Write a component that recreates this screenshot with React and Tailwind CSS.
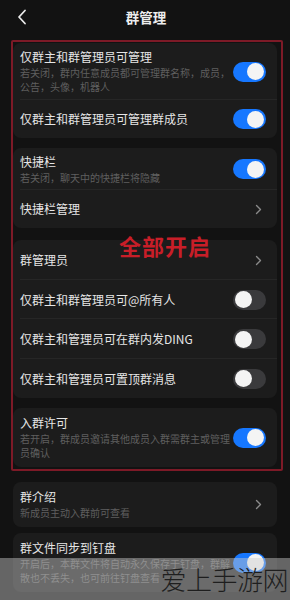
import React from "react";

const font = { fontFamily: '"Noto Sans CJK SC", "Noto Sans", sans-serif' };

function Toggle({ on }) {
  return on ? (
    <div className="relative z-10 w-[33px] h-[20px] rounded-full bg-[#1677ff] flex items-center justify-end pr-[2px] shrink-0">
      <div className="w-[17px] h-[17px] rounded-full bg-[#f4f4f4]" />
    </div>
  ) : (
    <div className="relative z-10 w-[33px] h-[20px] rounded-full bg-[#3a3a3c] flex items-center justify-start pl-[2px] shrink-0">
      <div className="w-[17px] h-[17px] rounded-full bg-[#f4f4f4]" />
    </div>
  );
}

function Chevron() {
  return (
    <svg width="7" height="11" viewBox="0 0 7 11" className="shrink-0 mr-[4px]">
      <path d="M1.5 1.5 L5.5 5.5 L1.5 9.5" stroke="#8a8a8a" strokeWidth="1.4" fill="none" strokeLinecap="round" strokeLinejoin="round" />
    </svg>
  );
}

function Row({ title, desc, right, h, divider, descCls = "" }) {
  return (
    <div className={`relative flex items-center pl-[7px] pr-[11px] ${h}`}>
      <div className="flex-1 min-w-0 pr-[4px]">
        <div className="text-[12px] leading-[16px] text-[#e6e6e6]">{title}</div>
        {desc && (
          <div className={`text-[10px] leading-[14px] text-[#5f5f5f] mt-[1px] whitespace-nowrap ${descCls}`}>
            {desc.map((l, i) => (
              <div key={i}>{l}</div>
            ))}
          </div>
        )}
      </div>
      {right}
      {divider && <div className="absolute left-[7px] right-0 bottom-0 h-px bg-[#262626]" />}
    </div>
  );
}

export default function App() {
  return (
    <div className="relative w-[290px] h-[600px] overflow-hidden bg-[#121212]" style={font}>
      {/* header */}
      <div className="h-[34px] flex items-center relative">
        <svg width="10" height="16" viewBox="0 0 10 16" className="absolute left-[17px] top-[9px]">
          <path d="M8 1.5 L2 8 L8 14.5" stroke="#eaeaea" strokeWidth="1.8" fill="none" strokeLinecap="round" strokeLinejoin="round" />
        </svg>
        <div className="flex-1 text-center text-[13.5px] font-bold text-[#ededed] pl-[2px]">群管理</div>
      </div>

      <div className="px-[13px] pt-[9px] flex flex-col">
        <div className="rounded-[8px] bg-[#1c1c1c]">
          <Row
            h="h-[57px]"
            title="仅群主和群管理员可管理"
            desc={["若关闭，群内任意成员都可管理群名称，成员，", "公告，头像，机器人"]}
            right={<Toggle on />}
            divider
          />
          <Row h="h-[38px]" title="仅群主和群管理员可管理群成员" right={<Toggle on />} />
        </div>

        <div className="rounded-[8px] bg-[#1c1c1c] mt-[10px]">
          <Row h="h-[42px]" title="快捷栏" desc={["若关闭，聊天中的快捷栏将隐藏"]} right={<Toggle on />} divider />
          <Row h="h-[38px]" title="快捷栏管理" right={<Chevron />} />
        </div>

        <div className="rounded-[8px] bg-[#1c1c1c] mt-[12px]">
          <Row h="h-[40px]" title="群管理员" right={<Chevron />} divider />
          <Row h="h-[39px]" title="仅群主和群管理员可@所有人" right={<Toggle />} divider />
          <Row h="h-[40px]" title="仅群主和管理员可在群内发DING" right={<Toggle />} divider />
          <Row h="h-[39px]" title="仅群主和管理员可置顶群消息" right={<Toggle />} />
        </div>

        <div className="rounded-[8px] bg-[#1c1c1c] mt-[10px]">
          <Row
            h="h-[59px]"
            title="入群许可"
            desc={["若开启，群成员邀请其他成员入群需群主或管理", "员确认"]}
            right={<Toggle on />}
          />
        </div>

        <div className="rounded-[8px] bg-[#1c1c1c] mt-[15px]">
          <Row h="h-[45px]" title="群介绍" desc={["新成员主动入群前可查看"]} right={<Chevron />} />
        </div>

        <div className="rounded-[8px] bg-[#1c1c1c] mt-[6px]">
          <Row
            h="h-[59px]"
            title="群文件同步到钉盘"
            desc={["开启后，本群文件将自动永久保存于钉盘，群解", "散也不丢失，也可前往钉盘查看"]}
            right={<Toggle on />}
          />
        </div>
      </div>

      {/* annotation overlay */}
      <div className="absolute left-[11px] top-[40px] w-[272px] h-[431px] border-2 border-[#7d1a27] rounded-[2px] pointer-events-none" />
      <div className="absolute left-[119px] top-[231px] text-[22px] leading-[28px] font-bold text-[#c81e28] tracking-[1px]">
        全部开启
      </div>

      {/* watermark */}
      <div className="absolute left-0 right-0 top-[558px] bottom-0 z-20 bg-[rgba(205,205,205,0.45)] flex items-center justify-end pr-[2px]">
        <div className="text-[26px] leading-[30px] text-[#1e1e1e] font-light tracking-[-0.5px]">爱上手游网</div>
      </div>
    </div>
  );
}
